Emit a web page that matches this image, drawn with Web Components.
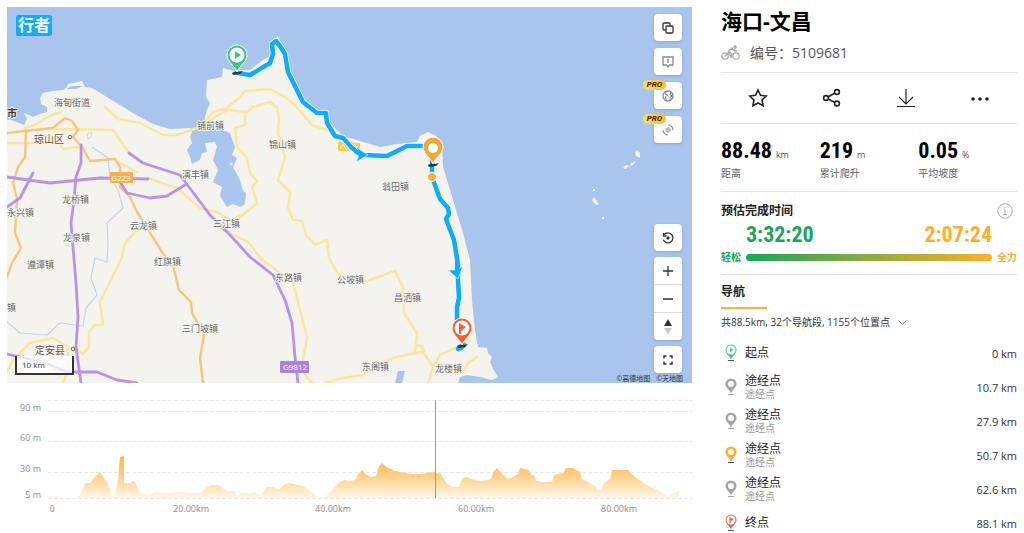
<!DOCTYPE html>
<html lang="zh-CN">
<head>
<meta charset="utf-8">
<title>海口-文昌</title>
<style>
    body {
        margin: 0;
        background: #fff;
        color: #333;
        font-family: "Open Sans", "Noto Sans CJK SC", sans-serif;
        font-size: 12px;
    }
</style>
</head>
<body>
<route-page>
    <route-map slot="map"></route-map>
    <elevation-chart slot="map"></elevation-chart>

    <route-header slot="side" number="5109681">海口-文昌</route-header>
    <route-actions slot="side"></route-actions>
    <route-stats slot="side">
        <stat-item value="88.48" unit="km">距离</stat-item>
        <stat-item value="219" unit="m">累计爬升</stat-item>
        <stat-item value="0.05" unit="%">平均坡度</stat-item>
    </route-stats>
    <time-estimate slot="side" easy="3:32:20" hard="2:07:24">预估完成时间</time-estimate>
    <route-nav slot="side">
        <way-point kind="start" distance="0 km">起点</way-point>
        <way-point distance="10.7 km" note="途经点">途经点</way-point>
        <way-point distance="27.9 km" note="途经点">途经点</way-point>
        <way-point kind="active" distance="50.7 km" note="途经点">途经点</way-point>
        <way-point distance="62.6 km" note="途经点">途经点</way-point>
        <way-point kind="end" distance="88.1 km">终点</way-point>
    </route-nav>
</route-page>

<script>
// attaches an open shadow root with the given markup
class BaseElement extends HTMLElement {
    constructor() {
        super();
        this.attachShadow({ mode: 'open' });
        const template = document.createElement('template');
        template.innerHTML = this.constructor.markup || '';
        this.shadowRoot.appendChild(template.content.cloneNode(true));
    }

    fill(selector, text) {
        this.shadowRoot.querySelector(selector).textContent = text;
    }
}

class RoutePage extends BaseElement {
    static markup = `
        <style>
            :host { display: block; height: 100vh; overflow: hidden; }
            main { display: flex; gap: 29px; padding: 7px; }
            .map { flex: 1; min-width: 0; }
            aside { flex: 0 0 296px; }
        </style>
        <main>
            <div class="map"><slot name="map"></slot></div>
            <aside><slot name="side"></slot></aside>
        </main>`;
}

class MapButton extends BaseElement {
    static markup = `
        <style>
            :host { display: block; position: relative; }
            button {
                display: flex;
                align-items: center;
                justify-content: center;
                width: 28px;
                height: 27px;
                padding: 0;
                border: 0;
                border-radius: 4px;
                background: #fff;
                color: #333;
                box-shadow: 0 1px 3px rgba(60, 90, 140, .3);
            }
            :host([grouped]) button { border-radius: 0; box-shadow: none; }
            :host([muted]) button { color: #888; }
            .pro {
                display: none;
                position: absolute;
                top: -2px;
                left: -11px;
                width: 23px;
                border-radius: 5px;
                background: linear-gradient(90deg, #fddc72, #fdbb2e);
                color: #3a2a10;
                font: italic bold 8px/10px Roboto, sans-serif;
                text-align: center;
            }
            :host([pro]) .pro { display: block; }
        </style>
        <button type="button"><slot></slot></button>
        <span class="pro">PRO</span>`;

    connectedCallback() {
        this.shadowRoot.querySelector('button').setAttribute('aria-label', this.getAttribute('label'));
    }
}

const pin = (x, y, color, inner) => `
    <g transform="translate(${x} ${y})">
        <path d="M-5 1l4-2 3 1 4-1-3 3-7 1z" fill="#26384f"/>
        <path d="M0 0C-2-6-10-10-10-17a10 10 0 0 1 20 0C10-10 2-6 0 0z" fill="${color}" stroke="#fff" stroke-width="1"/>
        ${inner}
    </g>`;

const town = (x, y, name) => `<text x="${x}" y="${y}">${name}</text>`;

const track = '238,73 250,75 270,63 273,54 272,44 276,41 280,46 285,54 288,72 297,90 303,102 317,113 326,113 327,123 335,136 343,138 352,148 363,155 387,156 407,146 422,146 432,151 432,177 440,199 448,208 449,214 446,219 454,240 458,265 458,280 459,298 457,307 457,322 460,338';

class RouteMap extends BaseElement {
    static markup = `
        <style>
            :host { display: block; position: relative; aspect-ratio: 685 / 376; }
            .canvas { display: block; width: 100%; height: 100%; background: #a9c5ee; }
            .canvas polyline { fill: none; stroke-linejoin: round; stroke-linecap: round; }
            .river polyline { stroke: #bdd5f0; stroke-width: 1.2; }
            .yellow polyline { stroke: #f8e6a1; stroke-width: 2.5; }
            .orange polyline { stroke: #fac47c; stroke-width: 2.4; }
            .purple polyline { stroke: #b893eb; stroke-width: 2.8; }
            .route polyline { stroke: #12abfb; stroke-width: 4.6; }
            .route .edge { stroke: #fff; stroke-width: 6; }
            .towns { font-size: 9px; fill: #6a6a6a; stroke: #f8f7f3; stroke-width: 1.5; paint-order: stroke; }
            .towns .city { font-size: 10px; fill: #6d4c3d; }
            .towns .main { font-weight: bold; fill: #333; }
            .logo {
                position: absolute;
                top: 8px;
                left: 9px;
                padding: 0 2px;
                border-radius: 2px;
                background: #18a9f8;
                color: #fff;
                font-size: 16px;
                font-weight: bold;
                line-height: 21px;
            }
            .tools { position: absolute; right: 10px; display: grid; }
            .top { top: 7px; gap: 7px; }
            .bottom { bottom: 10px; gap: 6px; }
            .zoom {
                display: grid;
                gap: 1px;
                border-radius: 4px;
                background: #ddd;
                overflow: hidden;
                box-shadow: 0 1px 3px rgba(60, 90, 140, .3);
            }
            .scale {
                position: absolute;
                left: 8px;
                bottom: 8px;
                width: 50px;
                padding-left: 5px;
                border: solid #333;
                border-width: 0 2px 2px;
                background: rgba(255, 255, 255, .75);
                font-size: 8px;
                line-height: 17px;
            }
            .credit {
                position: absolute;
                right: 9px;
                bottom: 0;
                display: flex;
                gap: 6px;
                font-size: 7px;
                line-height: 8px;
            }
            .icon { fill: none; stroke: currentColor; stroke-width: 1.3; }
        </style>
        <svg class="canvas" viewBox="7 7 685 376" preserveAspectRatio="xMidYMid slice">
            <path fill="#f5f3ee" d="M7 119L17 122L24 125L27 119L24 113L33 117L40 114L47 112L47 107L41 104L40 98L43 93L53 91L63 90L67 87L68 84L82 81L85 87L92 88L115 102L133 113L153 124L170 129L190 128L193 131L203 130L205 117L207 110L210 103L206 97L207 80L222 77L223 68L233 71L250 70L263 60L272 55L271 43L278 36L280 42L285 53L290 73L300 97L313 110L327 112L330 123L343 136L363 142L380 147L397 144L417 142L420 136L428 132L436 136L442 143L443 167L450 190L463 233L470 260L472 300L475 330L478 347L487 348L488 353L492 357L490 362L493 369L498 377L492 380L480 377L467 375L460 377L458 383L7 383Z"/>
            <path fill="#a9c5ee" d="M66 89L72 86L83 86L76 89Z"/>
            <path fill="#a9c5ee" d="M193 129L204 129L223 130L230 133L235 147L232 155L237 158L233 167L240 180L243 191L246 193L245 204L240 207L233 204L227 207L220 196L222 187L213 182L218 170L213 160L217 147L215 142L205 143L207 152L202 153L200 160L192 164L190 157L187 150L192 143L190 137ZM398 371L405 371L402 383L395 383Z"/>
            <circle cx="231" cy="164" r="1.5" fill="#f5f3ee"/>
            <g fill="#f3f3ee">
                <path d="M637 150l3 3v5l-4-2-1-4zM631 163l5-2-3 4-3 1zM626 165l3 1-3 3-3-1zM594 197l3 4 2 4-4-1-3-4z"/>
                <circle cx="594" cy="190" r="1.2"/><circle cx="603" cy="218" r="1.2"/>
            </g>
            <g class="river">
                <polyline points="92,147 108,158 110,177 118,190 123,208 107,223 108,243 107,262 95,258 91,278 97,295 86,308 83,326 60,323 47,335 20,333 7,322"/>
            </g>
            <g class="yellow">
                <polyline points="105,107 118,119 140,123 163,135 177,135 200,127 213,112 227,108 240,97 245,91 270,89 285,97 297,107 312,125 330,131 343,137"/>
                <polyline points="207,122 227,110 247,112 253,107 270,102 277,108 279,117 278,133 285,157 278,180 290,192 288,207 293,220 302,221 306,235 315,245 327,240 329,258 337,272 347,280 367,281 378,277 395,271 403,287 404,313 417,333 415,353 423,352 433,367 428,383"/>
                <polyline points="417,345 422,347 424,352"/>
                <polyline points="415,353 397,357 383,362 363,375 343,378 325,383"/>
                <polyline points="433,367 440,355 453,349 470,341"/>
                <polyline points="463,372 468,363 477,357"/>
                <polyline points="245,112 245,125 235,128 237,147 247,158 250,173 257,181 252,187 257,203 243,215 230,220 217,212 200,208 177,188 167,185 148,178"/>
                <polyline points="217,227 230,233 248,242 262,260 293,282 300,310 307,337 303,360 303,372 312,383"/>
                <polyline points="25,128 37,124 47,117 61,112"/>
                <polyline points="50,129 113,130 129,153"/>
                <polyline points="7,143 60,143 63,149 78,147"/>
                <polyline points="118,162 137,172"/>
                <polyline points="142,225 125,243 122,257 100,302 103,325 95,325 89,332 89,347 83,354 75,347"/>
                <polyline points="7,372 13,360 30,343 53,338 68,347 68,370 63,383"/>
            </g>
            <g class="orange">
                <polyline points="7,133 53,128 65,118 72,121 78,130 73,137 82,147 90,161 115,159 120,167 120,187 130,197 137,212 162,252 173,265 179,290 191,302 192,313 204,335 200,358 203,383"/>
                <polyline points="26,130 25,157 18,167 13,183 17,199 15,233 21,248 12,263 7,277"/>
            </g>
            <g class="purple">
                <polyline points="7,177 50,183 100,178 148,179"/>
                <polyline points="81,145 81,163 76,177 74,200 71,223 76,283 78,317 76,347 81,383"/>
                <polyline points="33,173 20,198 7,207"/>
                <polyline points="129,153 143,163 180,175 210,215 230,235 250,257 273,275 285,300 292,323 295,357 298,383"/>
                <polyline points="119,180 127,193 150,198 167,196 185,185"/>
                <polyline points="7,354 43,362 67,372 97,372 117,380 137,383"/>
            </g>
            <circle cx="70" cy="137" r="1.8" fill="#fff" stroke="#666"/>
            <circle cx="73" cy="349" r="1.8" fill="#fff" stroke="#666"/>
            <path d="M87 134l5-2-1 5-3 2z" fill="none" stroke="#aee0c0" stroke-width=".8"/>
            <g class="towns">
                ${town(54, 106, '海甸街道')}
                <text class="main" x="7" y="117" font-size="10">市</text>
                <text class="city" x="34" y="143">琼山区</text>
                <text class="city" x="35" y="354">定安县</text>
                ${town(197, 129, '铺前镇')}
                ${town(269, 148, '锦山镇')}
                ${town(182, 178, '演丰镇')}
                ${town(382, 190, '翁田镇')}
                ${town(62, 203, '龙桥镇')}
                ${town(7, 216, '永兴镇')}
                ${town(130, 229, '云龙镇')}
                ${town(213, 227, '三江镇')}
                ${town(63, 241, '龙泉镇')}
                ${town(27, 268, '遵谭镇')}
                ${town(154, 265, '红旗镇')}
                ${town(275, 281, '东路镇')}
                ${town(337, 283, '公坡镇')}
                ${town(394, 301, '昌洒镇')}
                ${town(7, 311, '镇')}
                ${town(182, 332, '三门坡镇')}
                ${town(362, 370, '东阁镇')}
                ${town(435, 372, '龙楼镇')}
            </g>
            <g font-size="8" fill="#fff" text-anchor="middle">
                <rect x="110" y="172" width="23" height="11" rx="1" fill="#f9b04a"/>
                <text x="121" y="181">G223</text>
                <rect x="280" y="361" width="29" height="12" rx="1" fill="#ab82e4"/>
                <text x="295" y="370">G9812</text>
            </g>
            <path d="M338 142h8l14 1v8h-22z" fill="#fac957"/>
            <path d="M340 149l3-5 3 5m2-5v5h4m2-5l4 5" fill="none" stroke="#fff0c0"/>
            <g class="route">
                <polyline class="edge" points="${track}"/>
                <polyline points="${track}"/>
                <polyline points="464,345 461,348 458,349"/>
                <path d="M368 155l-12-8 3 8-3 7zM458 279l-10-9 8 0 7-4z" fill="#12abfb" stroke="#fff" stroke-width=".6"/>
                <path d="M355 151l6 4M457 262v10" stroke="#12abfb" stroke-width="4"/>
            </g>
            <circle cx="432" cy="177" r="4.5" fill="#f9ae3b" stroke="#fff"/>
            ${pin(237, 72, '#41c481', '<circle cy="-17" r="7.5" fill="#fff"/><path d="M-2-21L4-17L-2-13z" fill="#41c481"/>')}
            ${pin(433, 164, '#f5a838', '<circle cy="-16" r="5" fill="#fff"/>')}
            ${pin(462, 345, '#fb5a36', '<circle cy="-17" r="7.5" fill="#fff"/><path d="M-3-11v-11l7 4-5 4v3" fill="#fb5a36"/>')}
        </svg>
        <span class="logo">行者</span>
        <div class="tools top">
            <map-button label="图层">
                <svg class="icon" width="12" height="12"><rect x="1" y="1" width="7" height="7" rx="1"/><rect x="4" y="4" width="7" height="7" rx="1" fill="#fff"/></svg>
            </map-button>
            <map-button label="标注" muted>
                <svg class="icon" width="12" height="12"><path d="M1 1h10v8H7.500L6 11L4.500 9H1zM5 4l1-.6V7"/></svg>
            </map-button>
            <map-button label="全球热图" muted pro>
                <svg class="icon" width="12" height="12"><circle cx="6" cy="6" r="5"/><path d="M5 1L3 4l3 1-3 2 2 4M9 2L8 5l3 1-3 1v3" stroke-width="1"/></svg>
            </map-button>
            <map-button label="轨迹" muted pro>
                <svg class="icon" width="12" height="12"><circle cx="6" cy="6" r="2" fill="#bbb" stroke="#bbb"/><path d="M6 1a5 5 0 0 1 5 5M6 11A5 5 0 0 1 1 6" stroke-width="1.100"/></svg>
            </map-button>
        </div>
        <div class="tools bottom">
            <map-button label="复位">
                <svg class="icon" width="12" height="12"><path d="M2 2.700a5 5 0 1 1-.7 5M1.500 1v3h3"/><circle cx="6" cy="6" r="1" fill="currentColor"/></svg>
            </map-button>
            <div class="zoom">
                <map-button label="放大" grouped>
                    <svg class="icon" width="12" height="12"><path d="M6 1v10M1 6h10"/></svg>
                </map-button>
                <map-button label="缩小" grouped>
                    <svg class="icon" width="12" height="12"><path d="M1 6h10"/></svg>
                </map-button>
                <map-button label="指北" grouped>
                    <svg width="8" height="16"><path d="M4 0l4 7H0z" fill="#333"/><path d="M4 16l4-7H0z" fill="#ccc"/></svg>
                </map-button>
            </div>
            <map-button label="全屏">
                <svg class="icon" width="12" height="12"><path d="M2 4.500V2h2.500M7.500 2H10v2.500M10 7.500V10H7.500M4.500 10H2V7.500" stroke-width="1.500"/></svg>
            </map-button>
        </div>
        <div class="scale">10 km</div>
        <div class="credit"><span>©高德地图</span><span>©天地图</span></div>`;
}

class ElevationChart extends BaseElement {
    static markup = `
        <style>
            :host { display: block; }
            svg { display: block; width: 100%; }
            .grid { stroke: #e9e9e9; stroke-dasharray: 4 2; }
            text { fill: #8c8c8c; font-size: 9px; }
            .y { text-anchor: end; }
            .x { text-anchor: middle; }
        </style>
        <svg viewBox="7 383 685 135">
            <defs>
                <linearGradient id="area" gradientUnits="userSpaceOnUse" x1="0" y1="456" x2="0" y2="499">
                    <stop offset="0" stop-color="#fdb64a"/>
                    <stop offset=".35" stop-color="#fec774"/>
                    <stop offset="1" stop-color="#fff8ec"/>
                </linearGradient>
            </defs>
            <path class="grid" d="M48 400.500H692M48 411.500H692M48 441.500H692M48 472.500H692M48 498.500H692"/>
            <polygon fill="url(#area)" points="48,498 48,496 58,496 63,498 76,498 80,495 85,483 90,483 95,477 99,473 101,473 103,477 108,484 112,496 115,496 118,480 120,457 124,456 124,483 130,483 133,481 135,482 140,493 148,495 156,492 164,493 180,492 190,493 200,493 210,485 218,485 227,491 234,491 238,498 241,493 250,493 255,492 261,496 266,487 272,487 279,489 285,484 290,483 303,486 310,491 318,497 325,497 332,490 340,482 345,480 349,481 355,480 359,473 362,470 367,475 371,477 376,476 379,466 382,463 386,467 395,471 411,474 421,474 433,472 441,474 447,484 453,487 459,487 462,479 466,477 474,480 482,481 491,479 494,471 497,468 502,474 508,479 513,477 518,474 520,468 529,470 531,475 535,476 536,481 542,482 552,482 554,475 563,473 566,468 573,468 580,472 582,479 595,486 597,490 601,490 604,483 610,479 612,470 628,470 635,477 645,484 660,491 667,496 672,494 679,491 679,498"/>
            <path d="M435.500 400V498" stroke="#999"/>
            <g class="y">
                <text x="41" y="411">90 m</text>
                <text x="41" y="441">60 m</text>
                <text x="41" y="472">30 m</text>
                <text x="41" y="498">5 m</text>
            </g>
            <g class="x">
                <text x="52" y="512">0</text>
                <text x="191" y="512">20.00km</text>
                <text x="333" y="512">40.00km</text>
                <text x="476" y="512">60.00km</text>
                <text x="619" y="512">80.00km</text>
            </g>
        </svg>`;
}

class RouteHeader extends BaseElement {
    static markup = `
        <style>
            :host { display: block; height: 65px; border-bottom: 1px solid #e2e2e2; }
            h1 { margin: 0; color: #000; font-size: 21px; line-height: 28px; }
            p { display: flex; align-items: center; gap: 10px; margin: 0; padding-top: 7px; color: #555; font-size: 14px; line-height: 22px; }
            svg { fill: none; stroke: #aaa; stroke-width: 1.2; }
        </style>
        <h1><slot></slot></h1>
        <p>
            <svg width="19" height="16"><circle cx="4" cy="11" r="3.200"/><circle cx="15" cy="11" r="3.200"/><circle cx="14" cy="2" r="1.200" fill="#aaa"/><path d="M4 11l3-3 3 3M7 7l4-4 3 3h2M8 7l3 2-1 4" stroke-width="1.500"/></svg>
            <span>编号：<span class="number"></span></span>
        </p>`;

    connectedCallback() {
        this.fill('.number', this.getAttribute('number'));
    }
}

class RouteActions extends BaseElement {
    static markup = `
        <style>
            :host { display: grid; grid-template-columns: repeat(4, 1fr); height: 50px; border-bottom: 1px solid #e2e2e2; }
            button { display: grid; place-items: center; padding: 0; border: 0; background: none; color: #222; }
            svg { fill: none; stroke: currentColor; stroke-width: 1.6; }
        </style>
        <button type="button" aria-label="收藏"><svg width="20" height="20"><path d="M10 2l2.500 5.300 5.700.7-4.200 4 1.100 5.700L10 15l-5.100 2.700L6 12 1.800 8l5.700-.7z"/></svg></button>
        <button type="button" aria-label="分享"><svg width="20" height="20"><circle cx="4" cy="10" r="2.400"/><circle cx="15" cy="4" r="2.400"/><circle cx="15" cy="15.500" r="2.400"/><path d="M6 9l7-4M6 11l7 3.500"/></svg></button>
        <button type="button" aria-label="下载"><svg width="20" height="20"><path d="M10 1v15M3 9l7 7 7-7M1 18.500h18" stroke-width="1.200"/></svg></button>
        <button type="button" aria-label="更多"><svg width="20" height="20"><g fill="currentColor" stroke="none"><circle cx="3" cy="11" r="1.800"/><circle cx="10" cy="11" r="1.800"/><circle cx="17" cy="11" r="1.800"/></g></svg></button>`;
}

class RouteStats extends BaseElement {
    static markup = `
        <style>
            :host { display: grid; grid-template-columns: repeat(3, 1fr); height: 67px; border-bottom: 1px solid #e2e2e2; }
        </style>
        <slot></slot>`;
}

class StatItem extends BaseElement {
    static markup = `
        <style>
            :host { display: block; padding-top: 14px; }
            .figure { display: flex; align-items: baseline; gap: 4px; height: 27px; }
            .value { color: #000; font: bold 22px/26px "Roboto Condensed", "DejaVu Sans Condensed", sans-serif; }
            .unit { color: #555; font-size: 9px; line-height: 12px; }
            .name { color: #666; font-size: 10px; line-height: 16px; }
        </style>
        <div class="figure"><span class="value"></span><span class="unit"></span></div>
        <div class="name"><slot></slot></div>`;

    connectedCallback() {
        this.fill('.value', this.getAttribute('value'));
        this.fill('.unit', this.getAttribute('unit'));
    }
}

class TimeEstimate extends BaseElement {
    static markup = `
        <style>
            :host { display: block; height: 82px; border-bottom: 1px solid #e2e2e2; color: #222; }
            header { display: flex; align-items: center; justify-content: space-between; padding: 9px 4px 0 0; }
            h2 { margin: 0; font-size: 12px; line-height: 20px; }
            button { display: flex; padding: 0; border: 0; background: none; }
            .range { display: grid; grid-template-columns: auto 1fr auto; align-items: center; column-gap: 5px; font-size: 10px; font-weight: bold; line-height: 16px; }
            .times { grid-column: 2; display: flex; justify-content: space-between; font: bold 22px/28px "Roboto Condensed", "DejaVu Sans Condensed", sans-serif; }
            .easy { grid-column: 1; color: #1da45c; }
            .hard { color: #fdaf2b; }
            .bar { height: 7px; border-radius: 4px; background: linear-gradient(90deg, #1da45c, #fdaf2b); }
        </style>
        <header>
            <h2><slot></slot></h2>
            <button type="button" aria-label="说明">
                <svg width="16" height="16" fill="none" stroke="#aaa"><circle cx="8" cy="8" r="7.300"/><path d="M6.500 7H8v4.500M6 11.500h4M8 4v1.300"/></svg>
            </button>
        </header>
        <div class="range">
            <div class="times"><span class="easy"></span><span class="hard"></span></div>
            <span class="easy">轻松</span>
            <span class="bar"></span>
            <span class="hard">全力</span>
        </div>`;

    connectedCallback() {
        this.fill('.times .easy', this.getAttribute('easy'));
        this.fill('.times .hard', this.getAttribute('hard'));
    }
}

class RouteNav extends BaseElement {
    static markup = `
        <style>
            :host { display: block; padding-top: 7px; color: #222; }
            h2 { box-sizing: border-box; width: 46px; height: 27px; margin: 0; border-bottom: 2px solid #fdb13a; font-size: 12px; line-height: 20px; }
            button { display: flex; align-items: center; gap: 8px; padding: 0; border: 0; background: none; color: #333; font: inherit; font-size: 10px; line-height: 27px; }
            .points { display: grid; grid-auto-rows: 34px; }
        </style>
        <h2>导航</h2>
        <button type="button">共88.5km, 32个导航段, 1155个位置点
            <svg width="9" height="6" fill="none" stroke="#888"><path d="M.5 .5l4 4 4-4"/></svg>
        </button>
        <div class="points" role="list"><slot></slot></div>`;
}

const pinColors = { start: '#46c486', active: '#fbae35', end: '#f65f3c' };

class WayPoint extends BaseElement {
    static markup = `
        <style>
            :host { display: flex; align-items: center; }
            .pin { width: 12px; margin: 0 8px 0 4px; }
            .text { flex: 1; }
            .title { line-height: 14px; }
            .note { color: #999; font-size: 10px; line-height: 12px; }
            .distance { color: #333; font-size: 11px; }
        </style>
        <svg class="pin" viewBox="0 0 12 18"></svg>
        <div class="text">
            <div class="title"><slot></slot></div>
            <div class="note"></div>
        </div>
        <span class="distance"></span>`;

    connectedCallback() {
        const kind = this.getAttribute('kind');
        const color = pinColors[kind] || '#a5a5a5';
        let inner = '<circle cx="6" cy="6" r="3" fill="#fff"/>';
        if (kind === 'start') {
            inner = `<circle cx="6" cy="6" r="4.500" fill="#fff"/><path d="M5 3.700L8.500 6L5 8.300z" fill="${color}"/>`;
        }
        if (kind === 'end') {
            inner = `<circle cx="6" cy="6" r="4.500" fill="#fff"/><path d="M4.500 9V3l4 2-3 2.500V9z" fill="${color}"/>`;
        }
        this.setAttribute('role', 'listitem');
        this.shadowRoot.querySelector('.pin').innerHTML =
            `<path d="M3 16.500h6" stroke="${kind ? '#555' : color}"/><path d="M6 15.500C5 12 .5 10 .5 6a5.500 5.500 0 0 1 11 0C11.500 10 7 12 6 15.500z" fill="${color}"/>${inner}`;
        this.fill('.note', this.getAttribute('note') || '');
        this.fill('.distance', this.getAttribute('distance'));
    }
}

window.customElements.define('map-button', MapButton);
window.customElements.define('route-map', RouteMap);
window.customElements.define('elevation-chart', ElevationChart);
window.customElements.define('route-header', RouteHeader);
window.customElements.define('route-actions', RouteActions);
window.customElements.define('stat-item', StatItem);
window.customElements.define('route-stats', RouteStats);
window.customElements.define('time-estimate', TimeEstimate);
window.customElements.define('way-point', WayPoint);
window.customElements.define('route-nav', RouteNav);
window.customElements.define('route-page', RoutePage);
</script>
</body>
</html>
